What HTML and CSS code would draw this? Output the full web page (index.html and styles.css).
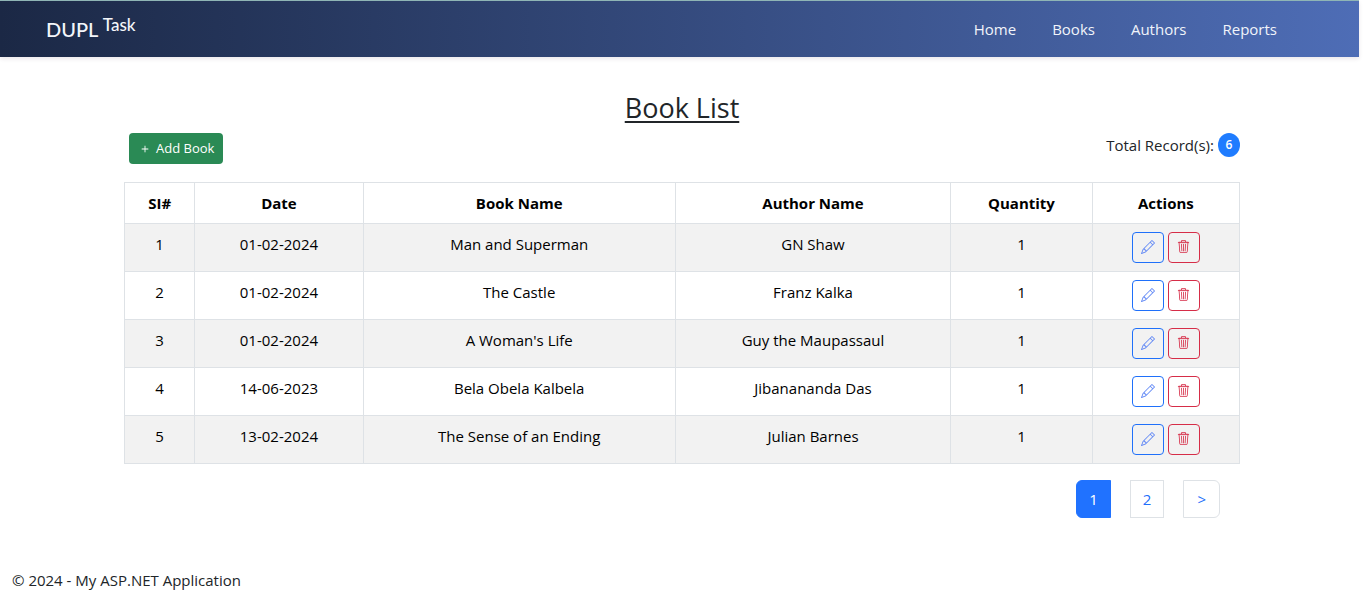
FILE: index.html
```html
<!DOCTYPE html>
<html lang="en">
<head>
<meta charset="utf-8">
<title>Book List</title>
<link rel="stylesheet" href="styles.css">
</head>
<body>
<svg width="0" height="0" class="sprite" aria-hidden="true">
  <symbol id="pencil" viewBox="0 0 16 16"><path d="M12.146.146a.5.5 0 0 1 .708 0l3 3a.5.5 0 0 1 0 .708l-10 10a.5.5 0 0 1-.168.11l-5 2a.5.5 0 0 1-.65-.65l2-5a.5.5 0 0 1 .11-.168zM11.207 2.5 13.5 4.793 14.793 3.5 12.5 1.207zm1.586 3L10.5 3.207 4 9.707V10h.5a.5.5 0 0 1 .5.5v.5h.5a.5.5 0 0 1 .5.5v.5h.293zm-9.761 5.175-.106.106-1.528 3.821 3.821-1.528.106-.106A.5.5 0 0 1 5 12.5V12h-.5a.5.5 0 0 1-.5-.5V11h-.5a.5.5 0 0 1-.468-.325"/></symbol>
  <symbol id="trash" viewBox="0 0 16 16"><path d="M6.5 1h3a.5.5 0 0 1 .5.5v1H6v-1a.5.5 0 0 1 .5-.5M11 2.5v-1A1.5 1.5 0 0 0 9.5 0h-3A1.5 1.5 0 0 0 5 1.5v1H1.500a.5.5 0 0 0 0 1h.538l.853 10.660A2 2 0 0 0 4.885 16h6.230a2 2 0 0 0 1.994-1.840l.853-10.660h.538a.5.5 0 0 0 0-1zm1.958 1-.846 10.580a1 1 0 0 1-.997.920h-6.230a1 1 0 0 1-.997-.920L3.042 3.500zm-7.487 1a.5.5 0 0 1 .528.470l.5 8.500a.5.5 0 0 1-.998.060L5 5.030a.5.5 0 0 1 .470-.530m5.058 0a.5.5 0 0 1 .470.530l-.5 8.500a.5.5 0 1 1-.998-.060l.5-8.500a.5.5 0 0 1 .528-.470M8 4.500a.5.5 0 0 1 .5.5v8.500a.5.5 0 0 1-1 0V5a.5.5 0 0 1 .5-.5"/><path opacity=".3" d="M2 1.500h12v2.500H2z"/></symbol>
  <symbol id="plus" viewBox="0 0 16 16"><path d="M8 4a.5.5 0 0 1 .5.5v3h3a.5.5 0 0 1 0 1h-3v3a.5.5 0 0 1-1 0v-3h-3a.5.5 0 0 1 0-1h3v-3A.5.5 0 0 1 8 4"/></symbol>
</svg>
<header class="navbar">
  <a class="brand" href="#">DUPL <sup>Task</sup></a>
  <nav class="nav-links">
    <a href="#">Home</a>
    <a href="#">Books</a>
    <a href="#">Authors</a>
    <a href="#">Reports</a>
  </nav>
</header>
<main class="container">
  <h1 class="title">Book List</h1>
  <div class="toolbar">
    <button class="btn-add" type="button"><svg viewBox="0 0 16 16"><use href="#plus"/></svg>Add Book</button>
    <div class="total">Total Record(s): <span class="badge">6</span></div>
  </div>
  <table class="books">
    <colgroup><col class="c-sl"><col class="c-date"><col class="c-book"><col class="c-author"><col class="c-qty"><col class="c-act"></colgroup>
    <thead>
      <tr><th>SI#</th><th>Date</th><th>Book Name</th><th>Author Name</th><th>Quantity</th><th>Actions</th></tr>
    </thead>
    <tbody>
      <tr><td>1</td><td>01-02-2024</td><td>Man and Superman</td><td>GN Shaw</td><td>1</td><td><div class="actions"><button type="button" class="icon-btn edit" aria-label="Edit"><svg><use href="#pencil"/></svg></button><button type="button" class="icon-btn delete" aria-label="Delete"><svg><use href="#trash"/></svg></button></div></td></tr>
      <tr><td>2</td><td>01-02-2024</td><td>The Castle</td><td>Franz Kalka</td><td>1</td><td><div class="actions"><button type="button" class="icon-btn edit" aria-label="Edit"><svg><use href="#pencil"/></svg></button><button type="button" class="icon-btn delete" aria-label="Delete"><svg><use href="#trash"/></svg></button></div></td></tr>
      <tr><td>3</td><td>01-02-2024</td><td>A Woman's Life</td><td>Guy the Maupassaul</td><td>1</td><td><div class="actions"><button type="button" class="icon-btn edit" aria-label="Edit"><svg><use href="#pencil"/></svg></button><button type="button" class="icon-btn delete" aria-label="Delete"><svg><use href="#trash"/></svg></button></div></td></tr>
      <tr><td>4</td><td>14-06-2023</td><td>Bela Obela Kalbela</td><td>Jibanananda Das</td><td>1</td><td><div class="actions"><button type="button" class="icon-btn edit" aria-label="Edit"><svg><use href="#pencil"/></svg></button><button type="button" class="icon-btn delete" aria-label="Delete"><svg><use href="#trash"/></svg></button></div></td></tr>
      <tr><td>5</td><td>13-02-2024</td><td>The Sense of an Ending</td><td>Julian Barnes</td><td>1</td><td><div class="actions"><button type="button" class="icon-btn edit" aria-label="Edit"><svg><use href="#pencil"/></svg></button><button type="button" class="icon-btn delete" aria-label="Delete"><svg><use href="#trash"/></svg></button></div></td></tr>
    </tbody>
  </table>
  <nav class="pagination" aria-label="Pages">
    <a class="page current" href="#">1</a>
    <a class="page" href="#">2</a>
    <a class="page next" href="#">&gt;</a>
  </nav>
</main>
<footer class="footer">© 2024 - My ASP.NET Application</footer>
</body>
</html>
```
FILE: styles.css
```css
* { box-sizing: border-box; }

body {
  margin: 0;
  background: #fff;
  color: #212529;
  font-family: "Open Sans", "Noto Sans", sans-serif;
  font-size: 15px;
  line-height: 24px;
}

.sprite { display: none; }

a { text-decoration: none; }

.navbar {
  display: flex;
  align-items: center;
  justify-content: space-between;
  height: 57px;
  margin-right: 5px;
  padding: 0 82px 0 46px;
  border-top: 1px solid #8fb5b5;
  background: linear-gradient(to right, #1b2845, #4e6db6);
  box-shadow: 0 2px 4px rgba(60, 20, 60, 0.1);
}

.brand {
  color: #f4f6fa;
  font-family: Lato, sans-serif;
  font-size: 20px;
  font-weight: 500;
}

.brand sup {
  font-size: 17px;
  line-height: 0;
  vertical-align: 6px;
}

.nav-links {
  display: flex;
  gap: 36px;
}

.nav-links a {
  color: #f1f4fa;
  font-weight: 500;
}

.container {
  max-width: 1140px;
  margin: 0 auto;
  padding: 34px 12px 0;
}

.title {
  margin: 0;
  font-size: 27px;
  font-weight: 500;
  line-height: 34px;
  text-align: center;
  text-decoration: underline;
  text-decoration-thickness: 2px;
  text-underline-offset: 3px;
}

.toolbar {
  display: flex;
  align-items: flex-start;
  justify-content: space-between;
  margin-bottom: 18px;
  padding: 8px 0 0 5px;
}

.btn-add {
  display: flex;
  align-items: center;
  gap: 4px;
  padding: 5px 9px;
  border: 0;
  border-radius: 4px;
  background: #2a8a55;
  color: #fff;
  font: 500 13px/21px "Open Sans", sans-serif;
}

.btn-add svg {
  width: 14px;
  height: 14px;
  fill: currentColor;
}

.total {
  display: flex;
  align-items: center;
  gap: 4px;
}

.badge {
  width: 22px;
  border-radius: 50%;
  background: #1f7cff;
  color: #fff;
  font-size: 12px;
  font-weight: 600;
  text-align: center;
}

.books {
  width: 100%;
  border-collapse: collapse;
  table-layout: fixed;
  color: #000;
  text-align: center;
}

.c-sl { width: 6.3%; }
.c-date { width: 15.1%; }
.c-book { width: 28%; }
.c-author { width: 24.7%; }
.c-qty { width: 12.7%; }
.c-act { width: 13.2%; }

.books th,
.books td {
  padding: 8px;
  border: 1px solid #dee2e6;
  vertical-align: top;
}

.books th { font-weight: 700; }

.books tbody tr:nth-child(odd) { background: #f2f2f2; }

.actions {
  display: flex;
  justify-content: center;
  gap: 4px;
}

.icon-btn {
  display: flex;
  align-items: center;
  justify-content: center;
  width: 32px;
  height: 31px;
  padding: 0 0 2px;
  border: 1px solid;
  border-radius: 4px;
  background: transparent;
}

.icon-btn svg {
  width: 14px;
  height: 14px;
  fill: currentColor;
}

.edit { color: #1f70fa; }
.delete { color: #d62d48; }

.edit svg { fill: #5e86f5; }

.delete svg {
  width: 13px;
  height: 13px;
}

.pagination {
  display: flex;
  justify-content: flex-end;
  gap: 19px;
  padding: 16px 20px 0 0;
}

.page {
  padding: 6px 12px;
  border: 1px solid #dee2e6;
  color: #1f70fa;
}

.page.current {
  border-color: #2072ff;
  border-radius: 6px 0 0 6px;
  background: #2072ff;
  color: #fff;
}

.page.next {
  padding: 6px 13px;
  border-radius: 0 6px 6px 0;
}

.footer {
  padding: 50px 12px 20px;
}
```
